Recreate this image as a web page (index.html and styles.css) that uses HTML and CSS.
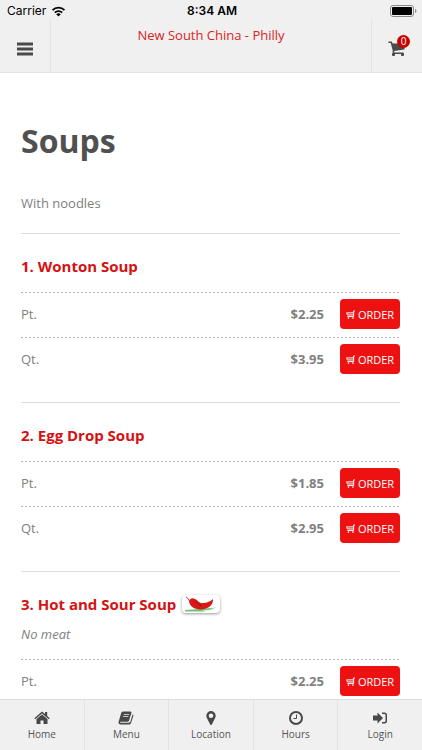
FILE: index.html
```html
<!DOCTYPE html>
<html lang="en">

<head>
	<title>New South China - Philly</title>
	<meta charset="UTF-8" />
	<meta name="viewport" content="width=device-width, initial-scale=1" />

	<link rel="stylesheet" href="styles.css">
</head>

<body>

<svg class="sprite" aria-hidden="true">
	<symbol id="cart" viewBox="0 0 10 10">
		<path d="M10 1H8.500V7.300H1.500M0.700 3L1.500 5.500H8.500M0.700 3.200H8.500" fill="none" stroke="#fff" stroke-width="1.100" />
		<circle cx="2.700" cy="9" r="0.900" />
		<circle cx="7.700" cy="9" r="0.900" />
	</symbol>
</svg>

<header class="header">
	<div class="status">
		<span class="carrier">Carrier
			<svg class="wifi" viewBox="0 0 16 12">
				<path d="M1.500 4.500a9.200 9.200 0 0 1 13 0M4 7.200a5.700 5.700 0 0 1 8 0" />
				<path class="wifi-dot" d="M8 11.500L5.500 9a3.600 3.600 0 0 1 5 0z" />
			</svg>
		</span>
		<span class="clock">8:34 AM</span>
		<svg class="battery" viewBox="0 0 27 12">
			<rect class="battery-case" x="0.500" y="0.500" width="23" height="11" rx="2.500" />
			<rect x="2" y="2" width="20" height="8" rx="1" />
			<path class="battery-tip" d="M25 4q1.500 0.500 1.500 2t-1.500 2z" />
		</svg>
	</div>

	<div class="toolbar">
		<button class="tool tool-menu" type="button" aria-label="Open menu">
			<svg class="bars" viewBox="0 0 16 14">
				<path d="M0 0.500h16v3H0zM0 5.500h16v3H0zM0 10.500h16v3H0z" />
			</svg>
		</button>
		<a class="title" href="#">New South China - Philly</a>
		<button class="tool tool-cart" type="button" aria-label="Shopping cart">
			<svg class="basket" viewBox="0 0 18 16">
				<path d="M0.500 0.500H3.700L4.700 2.500H16.500V8.500L6.200 10V11.500H15.500V13H4.700V9.500L2.700 2H0.500z" />
				<rect x="4" y="12" width="3" height="3" rx="1" />
				<rect x="13" y="12" width="3" height="3" rx="1" />
			</svg>
			<span class="badge">0</span>
		</button>
	</div>
</header>

<main class="content">
	<h1 class="heading">Soups</h1>
	<p class="intro">With noodles</p>

	<section class="item">
		<h2 class="name">1. Wonton Soup</h2>
		<table class="prices">
			<tr>
				<td>Pt.</td>
				<td class="price">$2.25</td>
				<td class="action"><button class="order" type="button"><svg class="order-icon"><use href="#cart" /></svg>ORDER</button></td>
			</tr>
			<tr>
				<td>Qt.</td>
				<td class="price">$3.95</td>
				<td class="action"><button class="order" type="button"><svg class="order-icon"><use href="#cart" /></svg>ORDER</button></td>
			</tr>
		</table>
	</section>

	<section class="item">
		<h2 class="name">2. Egg Drop Soup</h2>
		<table class="prices">
			<tr>
				<td>Pt.</td>
				<td class="price">$1.85</td>
				<td class="action"><button class="order" type="button"><svg class="order-icon"><use href="#cart" /></svg>ORDER</button></td>
			</tr>
			<tr>
				<td>Qt.</td>
				<td class="price">$2.95</td>
				<td class="action"><button class="order" type="button"><svg class="order-icon"><use href="#cart" /></svg>ORDER</button></td>
			</tr>
		</table>
	</section>

	<section class="item">
		<h2 class="name">3. Hot and Sour Soup
			<svg class="spicy" viewBox="0 0 38 18" role="img" aria-label="Spicy">
				<path class="grass" d="M3 15L17 14L35 12.500L27 14.500L34 14.500L20 15.500L24 16.500H3z" />
				<path class="stem" d="M4 2Q6.500 3 7.500 6" />
				<path class="chili" d="M7 6C8 3 11 2.500 13 4C16 5 17 9 22 8C26 7.500 29 6 31 4C31.500 9 27 14 20 14.500C13 14.500 7.500 12 7 6z" />
				<path class="shine" d="M13.500 6Q16 10 20 11" />
			</svg>
		</h2>
		<p class="note">No meat</p>
		<table class="prices">
			<tr>
				<td>Pt.</td>
				<td class="price">$2.25</td>
				<td class="action"><button class="order" type="button"><svg class="order-icon"><use href="#cart" /></svg>ORDER</button></td>
			</tr>
		</table>
	</section>
</main>

<nav class="tabs">
	<a class="tab" href="#">
		<svg class="tab-icon" viewBox="0 0 16 16">
			<path d="M8 1.500L11 4V2H13.200V6L15.700 8.200L14.800 9.200L8 3.500L1.200 9.200L0.300 8.200z" />
			<path d="M8 4.500L13.500 9.100V14H9.500V10.500H6.500V14H2.500V9.100z" />
		</svg>
		Home
	</a>
	<a class="tab" href="#">
		<svg class="tab-icon" viewBox="0 0 16 16">
			<path fill-rule="evenodd" d="M5 1.500H12.500Q13.800 1.500 13.400 3L11 10.700Q10.700 11.700 9.500 11.700H2.700Q1.700 12 2.200 12.700H10.700Q11.800 12.700 12.200 12L14.700 4.200Q15.700 4.500 15.400 5.700L13 13Q12.500 14.500 11 14.500H2.500Q0.200 14.300 0.600 11.800L3.200 3Q3.600 1.500 5 1.500zM5.900 4L5.700 4.700H11L11.200 4zM5.200 6.200L5 6.900H10.300L10.500 6.200z" />
		</svg>
		Menu
	</a>
	<a class="tab" href="#">
		<svg class="tab-icon" viewBox="0 0 16 16">
			<path fill-rule="evenodd" d="M8 1a4.700 4.700 0 0 1 4.700 4.700Q12.700 7 12 8.300L8.800 14.500Q8 15.500 7.200 14.500L4 8.300Q3.300 7 3.300 5.700A4.700 4.700 0 0 1 8 1zM8 3.400a2.300 2.300 0 1 0 0 4.600a2.300 2.300 0 0 0 0-4.600z" />
		</svg>
		Location
	</a>
	<a class="tab" href="#">
		<svg class="tab-icon tab-icon-line" viewBox="0 0 16 16">
			<circle cx="8" cy="8" r="6" />
			<path class="hands" d="M8.500 4.500V8.500H5.500" />
		</svg>
		Hours
	</a>
	<a class="tab" href="#">
		<svg class="tab-icon" viewBox="0 0 16 16">
			<path d="M1 5.500H5.500V2.500L11 8L5.500 13.500V10.500H1z" />
			<path d="M10 2.500H12.500Q15 2.500 15 5V11Q15 13.500 12.500 13.500H10V12H12.300Q13.500 12 13.500 10.800V5.200Q13.500 4 12.300 4H10z" />
		</svg>
		Login
	</a>
</nav>

</body>

</html>
```

FILE: styles.css
```css
* {
  box-sizing: border-box;
}

body {
  display: flex;
  flex-direction: column;
  height: 100vh;
  margin: 0;
  color: #808080;
  background: #fff;
  font: 13px/24px "Open Sans", sans-serif;
}

a {
  text-decoration: none;
}

button {
  border: 0;
  padding: 0;
  background: none;
  font-family: inherit;
  cursor: pointer;
}

.sprite {
  position: absolute;
  width: 0;
  height: 0;
}

/* header */

.header {
  flex: none;
  background: #f0f0f0;
  border-bottom: 1px solid #e3e3e3;
}

.status {
  display: grid;
  grid-template-columns: 1fr auto 1fr;
  align-items: center;
  height: 20px;
  padding: 2px 5px 0 7px;
  color: #000;
  font: 12px/18px Inter, sans-serif;
}

.carrier {
  display: flex;
  align-items: center;
  gap: 5px;
}

.wifi {
  width: 15px;
  height: 11px;
  fill: none;
  stroke: #000;
  stroke-width: 2;
}

.wifi-dot {
  fill: #000;
  stroke: none;
}

.clock {
  font-weight: 600;
}

.battery {
  width: 27px;
  height: 12px;
  justify-self: end;
}

.battery-case {
  fill: none;
  stroke: #888;
}

.battery-tip {
  fill: #888;
}

.toolbar {
  display: flex;
  height: 52px;
}

.tool {
  display: flex;
  align-items: center;
  justify-content: center;
  width: 51px;
  padding-top: 6px;
  fill: #4a4a4a;
}

.tool-menu {
  border-right: 1px solid #e3e3e3;
}

.tool-cart {
  position: relative;
  border-left: 1px solid #e3e3e3;
}

.bars {
  width: 16px;
  height: 14px;
}

.basket {
  width: 18px;
  height: 16px;
}

.badge {
  position: absolute;
  top: 15px;
  right: 12px;
  width: 13px;
  height: 13px;
  border-radius: 50%;
  color: #fff;
  background: #c90000;
  font-size: 10px;
  line-height: 13px;
}

.title {
  flex: 1;
  padding-top: 3px;
  color: #dd2222;
  text-align: center;
}

/* menu list */

.content {
  flex: 1;
  min-height: 0;
  padding: 0 22px 0 21px;
  overflow-y: auto;
  scrollbar-width: none;
}

.heading {
  margin: 48px 0 0;
  color: #505050;
  font-size: 32px;
  line-height: 40px;
}

.intro {
  margin: 30px 0 18px;
}

.item {
  padding: 20px 0;
  border-top: 1px solid #ddd;
}

.name {
  display: flex;
  align-items: center;
  gap: 6px;
  margin: 0;
  color: #d51111;
  font-size: 15px;
  line-height: 24px;
}

.spicy {
  width: 38px;
  height: 18px;
  border-radius: 4px;
  background: #fff;
  box-shadow: 0 1px 3px #999;
}

.chili {
  fill: #d81818;
}

.shine {
  fill: none;
  stroke: #a00c0c;
}

.stem {
  fill: none;
  stroke: #a55;
}

.grass {
  fill: #6cc57c;
}

.note {
  margin: 6px 0 -1px;
  font-style: italic;
}

.prices {
  width: 100%;
  margin-top: 14px;
  border-spacing: 0;
}

.prices tr {
  background: repeating-linear-gradient(90deg, #b5b5b5 0 2px, transparent 2px 4px) top / 100% 1px no-repeat;
}

.prices td {
  height: 45px;
  padding: 0 0 1px;
}

.prices .price {
  font-weight: bold;
  text-align: right;
}

.prices .action {
  width: 76px;
  text-align: right;
}

.order {
  display: inline-flex;
  align-items: center;
  justify-content: center;
  gap: 3px;
  width: 60px;
  height: 30px;
  border-radius: 4px;
  color: #fff;
  background: #ee1111;
  font-size: 11px;
  vertical-align: middle;
}

.order-icon {
  width: 9px;
  height: 9px;
  fill: #fff;
}

/* bottom tabs */

.tabs {
  display: flex;
  flex: none;
  height: 51px;
  border-top: 1px solid #ddd;
  background: #f0f0f0;
}

.tab {
  display: flex;
  flex: 1;
  flex-direction: column;
  align-items: center;
  padding-top: 10px;
  color: #555;
  font-size: 10px;
  line-height: 16px;
}

.tab + .tab {
  border-left: 1px solid #e3e3e3;
}

.tab-icon {
  width: 16px;
  height: 16px;
  fill: #484848;
}

.tab-icon-line {
  fill: none;
  stroke: #484848;
  stroke-width: 2;
}

.hands {
  stroke-width: 1;
}
```
